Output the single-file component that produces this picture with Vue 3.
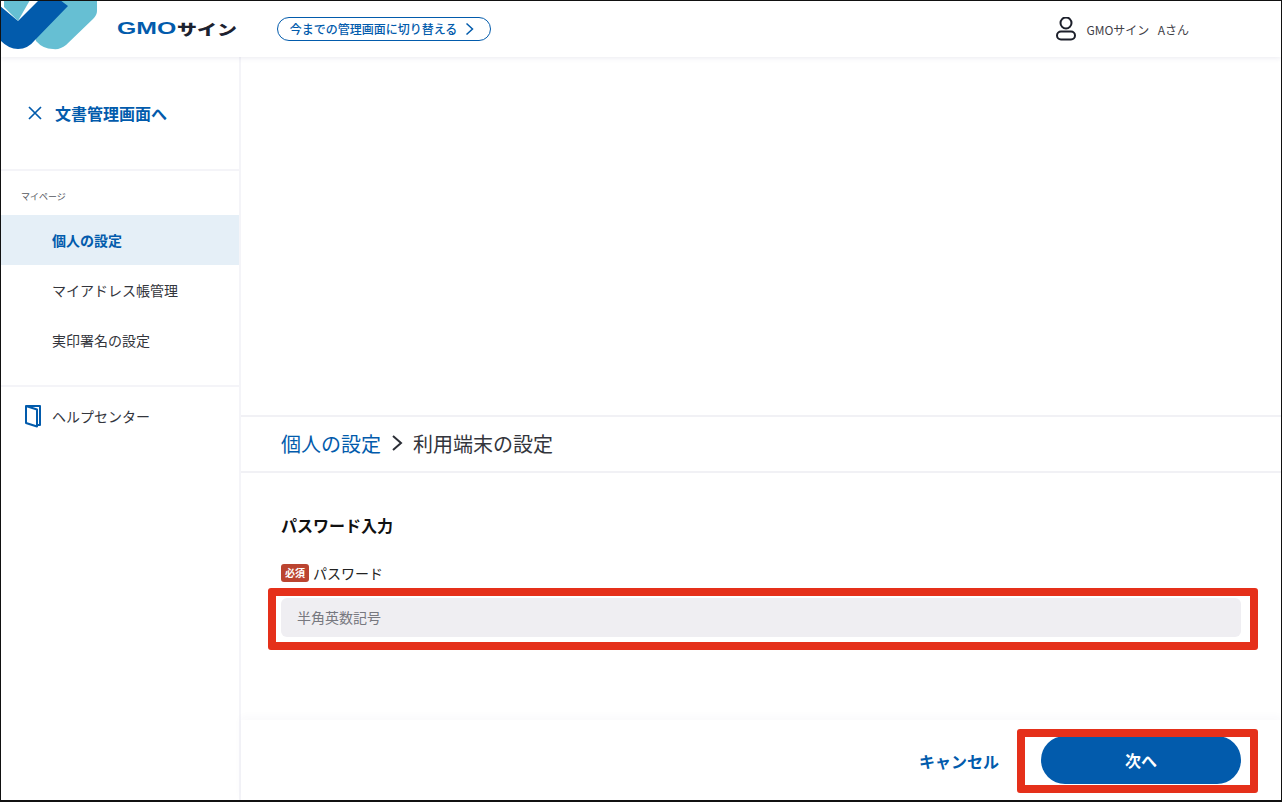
<script setup>
const menu = [
  { label: '個人の設定', active: true },
  { label: 'マイアドレス帳管理', active: false },
  { label: '実印署名の設定', active: false },
]
</script>

<template>
  <div class="frame">
    <header class="header">
      <svg class="mark" viewBox="0 0 100 50" width="100" height="50" aria-hidden="true">
        <path fill="#66bfd3" d="M60 0H97V11Q97 15 93 19L66 45Q60 50 53 49Q43 49 36 41L30 20Z" />
        <path fill="#66bfd3" d="M4 0H30L18 21L4 7Z" />
        <path fill="#025bac" d="M0 6L18 21L39 0H60L68 6L35 40Q28 49 18 49Q8 49 0 40Z" />
      </svg>
      <div class="brand"><span class="gmo">GMO</span><span class="sign">サイン</span></div>
      <button class="switch" type="button">
        <span>今までの管理画面に切り替える</span>
        <svg width="9" height="14" viewBox="0 0 9 14" aria-hidden="true">
          <path d="M1.5 1.5L7.5 7L1.5 12.5" fill="none" stroke="#025bac" stroke-width="1.5" />
        </svg>
      </button>
      <div class="user">
        <svg width="20" height="24" viewBox="0 0 20 24" aria-hidden="true">
          <circle cx="10" cy="6" r="5.5" fill="none" stroke="#1c1f2a" stroke-width="2" />
          <rect x="1" y="14.5" width="18" height="8" rx="4" fill="none" stroke="#1c1f2a" stroke-width="2" />
        </svg>
        <span>GMOサイン&nbsp;&nbsp;Aさん</span>
      </div>
    </header>

    <div class="body">
      <aside class="side">
        <div class="back">
          <svg width="16" height="16" viewBox="0 0 16 16" aria-hidden="true">
            <path d="M2 2L14 14M14 2L2 14" stroke="#025bac" stroke-width="1.7" fill="none" />
          </svg>
          <span>文書管理画面へ</span>
        </div>
        <div class="group">
          <div class="group-title">マイページ</div>
          <div v-for="item in menu" :key="item.label" class="item" :class="{ active: item.active }">
            {{ item.label }}
          </div>
        </div>
        <div class="help">
          <svg width="18" height="24" viewBox="0 0 18 24" aria-hidden="true">
            <path d="M2 2H16V21H13M2 2V19L13 22.5V5.5L2 2Z" fill="none" stroke="#025bac" stroke-width="2" stroke-linejoin="round" />
          </svg>
          <span>ヘルプセンター</span>
        </div>
      </aside>

      <main class="main">
        <div class="spacer"></div>
        <nav class="crumb">
          <span class="crumb-link">個人の設定</span>
          <svg width="12" height="18" viewBox="0 0 12 18" aria-hidden="true">
            <path d="M2 2L10 9L2 16" fill="none" stroke="#2b2e36" stroke-width="2" />
          </svg>
          <span>利用端末の設定</span>
        </nav>
        <section class="form">
          <h2>パスワード入力</h2>
          <div class="label"><span class="req">必須</span><span>パスワード</span></div>
          <input class="input" type="password" placeholder="半角英数記号" />
        </section>
        <footer class="footer">
          <span class="cancel">キャンセル</span>
          <button class="next" type="button">次へ</button>
        </footer>
      </main>
    </div>

    <div class="mark-box box-input"></div>
    <div class="mark-box box-next"></div>
  </div>
</template>

<style scoped>
.frame {
  position: relative;
  width: 1282px;
  height: 802px;
  box-sizing: border-box;
  border: 1px solid #111;
  border-bottom-width: 2px;
  background: #fff;
  display: flex;
  flex-direction: column;
  overflow: hidden;
  font-family: "Noto Sans CJK JP", "Noto Sans", sans-serif;
  color: #33353c;
}
.header {
  height: 56px;
  flex: none;
  display: flex;
  align-items: center;
  background: #fff;
  box-shadow: 0 1px 5px rgba(60, 60, 120, 0.1);
  position: relative;
  z-index: 1;
}
.mark {
  flex: none;
  align-self: flex-start;
  margin-left: -1px;
  margin-top: -1px;
}
.brand {
  width: 160px;
  margin-left: 17px;
  flex: none;
  display: flex;
  align-items: center;
  font-weight: 700;
  line-height: 16px;
}
.gmo {
  color: #025bac;
  font-family: "Liberation Sans", sans-serif;
  font-size: 16px;
  display: inline-block;
  width: 60px;
  transform: scaleX(1.55);
  transform-origin: left center;
}
.sign {
  color: #1c2230;
  font-size: 15px;
  font-weight: 900;
  display: inline-block;
  transform: scaleX(1.33);
  transform-origin: left center;
}
.switch {
  width: 214px;
  height: 24px;
  flex: none;
  box-sizing: border-box;
  border: 1px solid #025bac;
  border-radius: 12px;
  background: #fff;
  color: #025bac;
  font: 500 12px/1 "Noto Sans CJK JP", sans-serif;
  display: flex;
  align-items: center;
  justify-content: center;
  gap: 8px;
  padding: 0 4px 0 0;
}
.user {
  margin-left: auto;
  margin-right: 92px;
  display: flex;
  align-items: center;
  gap: 10px;
  font-size: 12px;
  word-spacing: 1.5px;
  color: #3f4148;
}
.body {
  flex: 1;
  min-height: 0;
  display: flex;
}
.side {
  width: 238px;
  flex: none;
  border-right: 2px solid #f4f4f8;
  display: flex;
  flex-direction: column;
}
.back {
  height: 114px;
  box-sizing: border-box;
  border-bottom: 2px solid #f4f4f8;
  padding-left: 26px;
  display: flex;
  align-items: center;
  gap: 12px;
  color: #025bac;
  font-size: 16px;
  font-weight: 700;
}
.group {
  padding-top: 17px;
  padding-bottom: 20px;
  border-bottom: 2px solid #f4f4f8;
}
.group-title {
  font-size: 9px;
  line-height: 18px;
  padding-left: 20px;
  margin-bottom: 9px;
  color: #55575e;
}
.item {
  height: 50px;
  line-height: 50px;
  padding-left: 51px;
  font-size: 14px;
}
.item.active {
  background: #e5eff7;
  color: #025bac;
  font-weight: 700;
}
.help {
  display: flex;
  align-items: center;
  gap: 10px;
  padding: 17px 0 0 23px;
  font-size: 14px;
}
.main {
  flex: 1;
  min-width: 0;
  display: flex;
  flex-direction: column;
}
.spacer {
  height: 358px;
  flex: none;
}
.crumb {
  height: 58px;
  box-sizing: border-box;
  flex: none;
  border-top: 2px solid #f1f1f5;
  border-bottom: 2px solid #f1f1f5;
  padding: 0 0 2px 40px;
  display: flex;
  align-items: center;
  gap: 10px;
  font-size: 20px;
}
.crumb-link {
  color: #025bac;
}
.form {
  flex: 1;
  padding: 40px 40px 0;
}
h2 {
  margin: 0;
  font-size: 16px;
  line-height: 24px;
  font-weight: 700;
  color: #111;
}
.label {
  margin-top: 26px;
  display: flex;
  align-items: center;
  gap: 4px;
  font-size: 14px;
  line-height: 20px;
  color: #222;
}
.req {
  width: 28px;
  height: 18px;
  border-radius: 3px;
  background: #bb4430;
  color: #fff;
  font-size: 10px;
  font-weight: 700;
  line-height: 18px;
  text-align: center;
}
.input {
  display: block;
  width: 960px;
  height: 39px;
  margin-top: 15px;
  box-sizing: border-box;
  border: 0;
  border-radius: 6px;
  background: #efeef2;
  padding: 0 16px 2px;
  font: 400 14px "Noto Sans CJK JP", sans-serif;
  outline: none;
}
.input::placeholder {
  color: #77787f;
  opacity: 1;
}
.footer {
  height: 80px;
  flex: none;
  box-sizing: border-box;
  box-shadow: 0 -3px 8px rgba(60, 60, 120, 0.03);
  padding: 16px 40px 16px 0;
  display: flex;
  justify-content: flex-end;
  align-items: flex-start;
  gap: 42px;
}
.cancel {
  color: #025bac;
  font-size: 16px;
  font-weight: 700;
  line-height: 50px;
}
.next {
  width: 200px;
  height: 48px;
  border: 0;
  border-radius: 24px;
  background: #025bac;
  color: #fff;
  font: 700 16px "Noto Sans CJK JP", sans-serif;
}
.mark-box {
  position: absolute;
  box-sizing: border-box;
  border: 8px solid #e5301a;
  border-radius: 3px;
  pointer-events: none;
  z-index: 2;
}
.box-input {
  left: 267px;
  top: 587px;
  width: 990px;
  height: 62px;
}
.box-next {
  left: 1016px;
  top: 728px;
  width: 241px;
  height: 64px;
}
</style>
